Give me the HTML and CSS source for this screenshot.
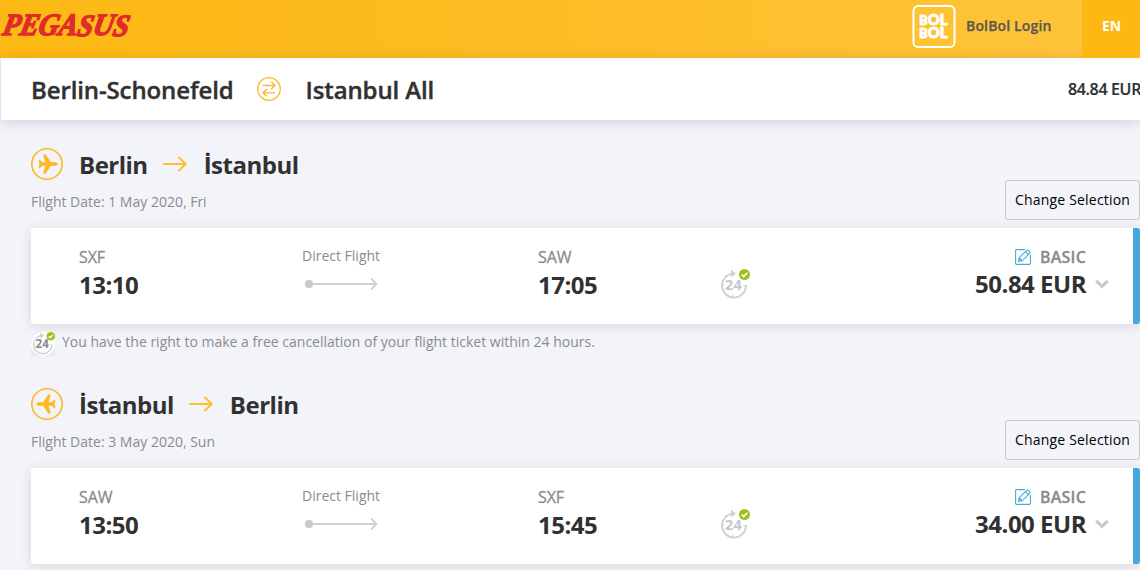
FILE: index.html
```html
<!DOCTYPE html>
<html lang="en">
<head>
    <meta charset="UTF-8">
    <meta name="viewport" content="width=device-width, initial-scale=1.0">
    <title>Pegasus</title>
    <link rel="stylesheet" href="styles.css">
</head>
<body>
    <!-- shared icons -->
    <svg class="sprite" aria-hidden="true">
        <symbol id="plane" viewBox="0 0 32 32">
            <circle cx="16" cy="16" r="15.2" fill="none" stroke="currentColor" stroke-width="1.6"/>
            <path d="M26.400 16c0-1-1.400-1.500-3-1.500h-3.800L15 7.200c-.5-.7-1-.9-1.600-.8-.6.100-.8.600-.6 1.200l1.900 6.800-3.700.2-1.900-2.400c-.4-.5-1.200-.4-1.100.3l.7 3.500-.7 3.500c-.1.700.7.800 1.100.3l1.900-2.400 3.700.2-1.900 6.800c-.2.600 0 1.100.6 1.200.6.100 1.100-.1 1.600-.8l4.600-7.300h3.800c1.600 0 3-.5 3-1.500z" fill="currentColor" stroke="currentColor" stroke-width=".6"/>
        </symbol>
        <symbol id="arrow" viewBox="0 0 24 16">
            <path d="M1 8h21.500M16 1.500L22.700 8 16 14.500" fill="none" stroke="currentColor" stroke-width="2" stroke-linecap="round" stroke-linejoin="round"/>
        </symbol>
        <symbol id="line" viewBox="0 0 74 14">
            <circle cx="4" cy="7" r="4" fill="#c8c9cb"/>
            <path d="M7 7h64M66 1.500L71.500 7 66 12.500" fill="none" stroke="#cfd0d2" stroke-width="1.800"/>
        </symbol>
        <symbol id="clock" viewBox="0 0 30 30">
            <path d="M13 4.600A12 12 0 1 0 26 17" fill="none" stroke="#cecfd1" stroke-width="1.800"/>
            <path d="M11.500 1.500v6.200L15.500 4.500zM1.500 16h3M13 25.500v3M23 16.500h4" fill="#cecfd1" stroke="#cecfd1" stroke-width="1"/>
            <text x="13.300" y="20.500" class="clock-num">24</text>
            <circle cx="24.500" cy="5.500" r="5.500" fill="#9bc31c"/>
            <path d="M21.800 5.500l2 2 3.500-3.700" fill="none" stroke="#fff" stroke-width="1.600"/>
        </symbol>
        <symbol id="edit" viewBox="0 0 16 16">
            <path d="M10 .6H1.500a.9.9 0 0 0-.9.9v13a.9.9 0 0 0 .9.9h13a.9.9 0 0 0 .9-.9V6M3.500 12.500l.7-3.700 7.500-7.500a1 1 0 0 1 1.400 0l1.600 1.600a1 1 0 0 1 0 1.400l-7.500 7.500zM4.300 9l2.700 2.700M10.500 2.700l2.800 2.800" fill="none" stroke="#48a9d8" stroke-width="1.100"/>
        </symbol>
        <symbol id="chevron" viewBox="0 0 14 10">
            <path d="M1.200 1.800L7 7.400l5.800-5.600" fill="none" stroke="#c9cacc" stroke-width="3.200"/>
        </symbol>
    </svg>

    <header class="header">
        <svg class="logo" viewBox="0 0 134 44">
            <g transform="translate(8 0) skewX(-12)">
                <text x="1" y="35" textLength="126" lengthAdjust="spacingAndGlyphs">PEGA<tspan dy="1.500">S</tspan><tspan dy="-1.500">U</tspan><tspan dy="1">S</tspan></text>
            </g>
        </svg>
        <div class="login">
            <svg class="bolbol" viewBox="0 0 44 44">
                <rect x="1" y="1" width="42" height="42" rx="5" fill="none" stroke="#fff" stroke-width="2"/>
                <g class="bolbol-text">
                    <text x="7" y="20" textLength="29" lengthAdjust="spacingAndGlyphs"><tspan class="small">B</tspan>OL</text>
                    <text x="7" y="34" textLength="29" lengthAdjust="spacingAndGlyphs"><tspan class="small">B</tspan>OL</text>
                </g>
            </svg>
            <span>BolBol Login</span>
        </div>
        <div class="lang">EN</div>
    </header>

    <div class="route-bar">
        <span class="city">Berlin-Schonefeld</span>
        <svg class="swap" viewBox="0 0 24 24">
            <circle cx="12" cy="12" r="11.300"/>
            <path d="M6 8.500h12M14.200 4.800L18 8.500l-3.800 3.700M18 15.800H6M9.800 12L6 15.800l3.800 3.700"/>
        </svg>
        <span class="city">Istanbul All</span>
        <span class="total">84.84 EUR</span>
    </div>

    <main class="flights">
        <section class="flight">
            <h2 class="title">
                <svg class="plane"><use href="#plane"/></svg>
                <span>Berlin</span>
                <svg class="arrow"><use href="#arrow"/></svg>
                <span>İstanbul</span>
            </h2>
            <div class="sub">
                <span>Flight Date: 1 May 2020, Fri</span>
                <button class="change">Change Selection</button>
            </div>
            <div class="card">
                <div class="port"><span>SXF</span><strong>13:10</strong></div>
                <div class="direct"><span>Direct Flight</span><svg><use href="#line"/></svg></div>
                <div class="port"><span>SAW</span><strong>17:05</strong></div>
                <svg class="clock"><use href="#clock"/></svg>
                <div class="fare">
                    <div class="brand"><svg><use href="#edit"/></svg><span>BASIC</span></div>
                    <strong>50.84 EUR</strong>
                </div>
                <svg class="chevron"><use href="#chevron"/></svg>
            </div>
            <div class="note">
                <svg class="note-clock" viewBox="0 0 24 24">
                    <path d="M0 17h24v7H0z" fill="#e9eaed"/>
                    <circle cx="12" cy="12" r="12" fill="#fff"/>
                    <use href="#clock" x="1" y="0" width="23" height="23"/>
                </svg>
                <span>You have the right to make a free cancellation of your flight ticket within 24 hours.</span>
            </div>
        </section>

        <section class="flight last">
            <h2 class="title">
                <svg class="plane back"><use href="#plane"/></svg>
                <span>İstanbul</span>
                <svg class="arrow"><use href="#arrow"/></svg>
                <span>Berlin</span>
            </h2>
            <div class="sub">
                <span>Flight Date: 3 May 2020, Sun</span>
                <button class="change">Change Selection</button>
            </div>
            <div class="card">
                <div class="port"><span>SAW</span><strong>13:50</strong></div>
                <div class="direct"><span>Direct Flight</span><svg><use href="#line"/></svg></div>
                <div class="port"><span>SXF</span><strong>15:45</strong></div>
                <svg class="clock"><use href="#clock"/></svg>
                <div class="fare">
                    <div class="brand"><svg><use href="#edit"/></svg><span>BASIC</span></div>
                    <strong>34.00 EUR</strong>
                </div>
                <svg class="chevron"><use href="#chevron"/></svg>
            </div>
        </section>
    </main>
</body>
</html>
```
FILE: styles.css
```css
* {
    box-sizing: border-box;
}
body {
    margin: 0;
    height: 570px;
    overflow: hidden;
    background: #f3f4f9;
    color: #313132;
    font-family: "Open Sans", "Noto Sans", sans-serif;
}
.sprite {
    display: none;
}
.header {
    height: 58px;
    display: flex;
    background: linear-gradient(90deg, #fdb913 0%, #fdba1c 30%, #fec43c 100%);
}
.logo {
    width: 134px;
    height: 44px;
    font: italic bold 31px "Liberation Serif", serif;
    fill: #e02b2b;
    stroke: #e02b2b;
    stroke-width: 1.5;
}
.login {
    margin-left: auto;
    width: 170px;
    display: flex;
    gap: 10px;
    padding-top: 5px;
    font-size: 14px;
    font-weight: 600;
    letter-spacing: .15px;
    line-height: 42px;
    color: #595850;
    -webkit-text-stroke: .25px;
}
.bolbol {
    width: 44px;
    height: 43px;
}
.bolbol-text {
    font: 900 15.5px Lato, sans-serif;
    fill: #fff;
    stroke: #fff;
    stroke-width: 1;
    stroke-linejoin: round;
}
.small {
    font-size: 13px;
}
.lang {
    width: 58px;
    padding-left: 20px;
    background: #fdb813;
    color: #fff;
    font-size: 14px;
    font-weight: 700;
    line-height: 52px;
}
.route-bar {
    height: 62px;
    margin-left: 1px;
    padding-left: 30px;
    display: flex;
    align-items: center;
    background: #fff;
    font-size: 24px;
    font-weight: 600;
    letter-spacing: -.12px;
    line-height: 62px;
    white-space: nowrap;
    box-shadow: 0 2px 12px rgba(40, 40, 60, .17);
    -webkit-text-stroke: .4px;
}
.city {
    padding-top: 2px;
}
.swap {
    width: 24px;
    height: 24px;
    margin: 0 25px 0 23px;
    fill: none;
    stroke: #fdb827;
    stroke-width: 1.3;
}
.total {
    margin-left: auto;
    margin-right: -1px;
    font-size: 16px;
    letter-spacing: -.35px;
    -webkit-text-stroke: .2px;
}
.flights {
    padding: 28px 0 0 31px;
}
.flight {
    height: 240px;
}
.last {
    height: 176px;
}
.title {
    height: 32px;
    margin: 0;
    display: flex;
    align-items: center;
    font-size: 24px;
    font-weight: 700;
    letter-spacing: -.5px;
    line-height: 36px;
}
.title span {
    padding-top: 2px;
}
.plane {
    width: 32px;
    height: 32px;
    margin-right: 16px;
    color: #fdb81e;
}
.back {
    transform: scaleX(-1);
}
.arrow {
    width: 24px;
    height: 16px;
    margin: 0 17px 0 15px;
    color: #fdc029;
}
.sub {
    height: 48px;
    display: flex;
    justify-content: space-between;
    align-items: flex-start;
    font-size: 14px;
    line-height: 43px;
    color: #8a8b8d;
}
.change {
    width: 135px;
    height: 40px;
    padding: 0 0 2px;
    border: 1px solid #c8c9cd;
    border-radius: 3px;
    background: transparent;
    color: #000;
    font: 500 14px "Open Sans", sans-serif;
    letter-spacing: .2px;
}
.card {
    height: 96px;
    padding-top: 18px;
    padding-left: 48px;
    display: grid;
    grid-template-columns: 223px 236px 182px 240px 126px 40px;
    background: #fff;
    border-right: 7px solid #48a9d8;
    border-radius: 3px;
    box-shadow: 0 2px 12px rgba(40, 40, 60, .14);
}
.port span {
    display: block;
    font-size: 16px;
    letter-spacing: -.1px;
    line-height: 22px;
    color: #8a8b8d;
    -webkit-text-stroke: .3px;
}
.port strong,
.fare strong {
    display: block;
    font-size: 24px;
    font-weight: 700;
    letter-spacing: -.5px;
    line-height: 33px;
}
.fare strong {
    line-height: 31px;
}
.direct span {
    display: block;
    font-size: 14px;
    line-height: 20px;
    color: #8a8b8d;
}
.direct svg {
    display: block;
    width: 74px;
    height: 14px;
    margin: 11px 0 0 3px;
}
.clock {
    width: 30px;
    height: 30px;
    margin-top: 23px;
    color: #c6c7c9;
}
.clock-num {
    font: 700 15px "Open Sans", sans-serif;
    fill: currentColor;
    text-anchor: middle;
}
.fare {
    text-align: right;
}
.brand {
    height: 22px;
    display: flex;
    justify-content: flex-end;
    align-items: center;
    gap: 9px;
    font-size: 16px;
    font-weight: 600;
    line-height: 22px;
    color: #8a8b8d;
    -webkit-text-stroke: .3px;
}
.brand span {
    letter-spacing: .2px;
}
.brand svg {
    width: 16px;
    height: 16px;
}
.chevron {
    width: 14px;
    height: 10px;
    margin: 33px 0 0 9px;
}
.note {
    height: 36px;
    padding-top: 8px;
    display: flex;
    gap: 7px;
    font-size: 14px;
    line-height: 20px;
    color: #8a8b8d;
}
.note-clock {
    width: 24px;
    height: 24px;
}
```
